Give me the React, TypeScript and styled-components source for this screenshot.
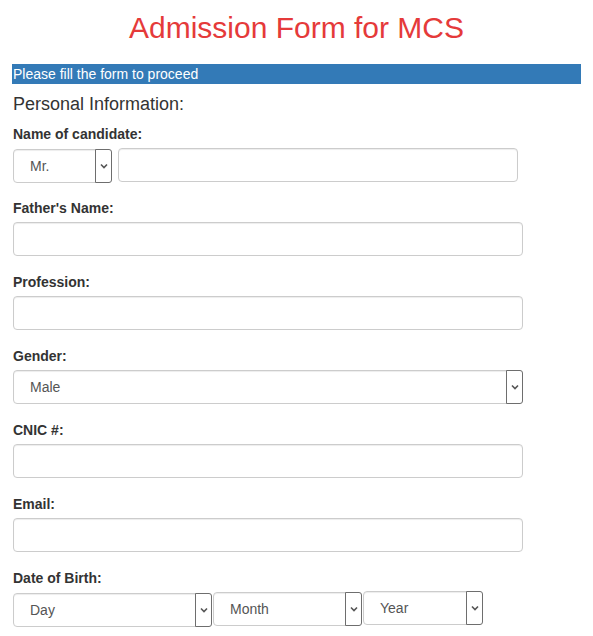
import React from 'react';
import styled, {createGlobalStyle} from 'styled-components';

const GlobalStyle = createGlobalStyle`
    body {
        margin: 0;
        background: #fff;
        font-family: "Liberation Sans", Arial, sans-serif;
        color: #333;
    }
`;

const Page = styled.div`
    padding: 11px 12px 0 12px;
`;

const Title = styled.h1`
    margin: 0 0 20px 0;
    font-size: 30px;
    line-height: 33px;
    font-weight: normal;
    text-align: center;
    color: #e53a3a;
`;

const Notice = styled.div`
    width: 569px;
    height: 20px;
    background: #337ab7;
    color: #fff;
    font-size: 14px;
    line-height: 20px;
    padding-left: 1px;
    box-sizing: border-box;
`;

const Section = styled.h3`
    margin: 10px 0 10px 1px;
    font-size: 18px;
    line-height: 20px;
    font-weight: normal;
    color: #333;
`;

const Form = styled.form`
    padding-left: 1px;
`;

const Group = styled.div`
    margin-bottom: 16px;
`;

const Label = styled.label`
    display: block;
    margin-bottom: 4px;
    font-size: 14px;
    line-height: 20px;
    font-weight: bold;
    color: #333;
`;

const Row = styled.div<{$gap: number}>`
    display: flex;
    align-items: flex-start;
    gap: ${p => p.$gap}px;
`;

const Input = styled.input<{$width: number}>`
    display: block;
    width: ${p => p.$width}px;
    height: 34px;
    box-sizing: border-box;
    border: 1px solid #ccc;
    border-radius: 4px;
    box-shadow: inset 0 1px 1px rgba(0, 0, 0, 0.075);
    background: #fff;
    padding: 6px 12px;
    font-family: inherit;
    font-size: 14px;
    color: #555;
    outline: none;
`;

const SelectBox = styled.div<{$width: number; $offset?: number}>`
    position: relative;
    display: flex;
    align-items: center;
    width: ${p => p.$width}px;
    height: 34px;
    transform: translateY(${p => p.$offset || 0}px);
    box-sizing: border-box;
    border: 1px solid #ccc;
    border-radius: 4px;
    box-shadow: inset 0 1px 1px rgba(0, 0, 0, 0.075);
    background: #fff;
    padding-left: 16px;
    font-size: 14px;
    color: #555;
`;

const Arrow = styled.span`
    position: absolute;
    top: -1px;
    right: -1px;
    bottom: -1px;
    width: 17px;
    box-sizing: border-box;
    border: 1px solid #6e6e6e;
    border-radius: 0 3px 3px 0;
    background: #fff;
    display: flex;
    align-items: center;
    justify-content: center;
`;

const Chevron = () => (
    <svg width="8" height="6" viewBox="0 0 8 6">
        <path d="M1 1.5 L4 4.5 L7 1.5" fill="none" stroke="#555" strokeWidth="1.6"/>
    </svg>
);

const Select = ({value, width, offset}: {value: string; width: number; offset?: number}) => (
    <SelectBox $width={width} $offset={offset}>
        {value}
        <Arrow><Chevron/></Arrow>
    </SelectBox>
);

const fields = ['Profession:'];

export default function App() {
    return (
        <>
            <GlobalStyle/>
            <Page>
                <Title>Admission Form for MCS</Title>
                <Notice>Please fill the form to proceed</Notice>
                <Section>Personal Information:</Section>
                <Form>
                    <Group>
                        <Label>Name of candidate:</Label>
                        <Row $gap={6}>
                            <Select value="Mr." width={99} offset={1}/>
                            <Input $width={400}/>
                        </Row>
                    </Group>
                    <Group>
                        <Label>Father's Name:</Label>
                        <Input $width={510}/>
                    </Group>
                    {fields.map(f => (
                        <Group key={f}>
                            <Label>{f}</Label>
                            <Input $width={510}/>
                        </Group>
                    ))}
                    <Group>
                        <Label>Gender:</Label>
                        <Select value="Male" width={510}/>
                    </Group>
                    <Group>
                        <Label>CNIC #:</Label>
                        <Input $width={510}/>
                    </Group>
                    <Group>
                        <Label>Email:</Label>
                        <Input $width={510}/>
                    </Group>
                    <Group>
                        <Label>Date of Birth:</Label>
                        <Row $gap={1}>
                            <Select value="Day" width={199} offset={1}/>
                            <Select value="Month" width={149}/>
                            <Select value="Year" width={120} offset={-1}/>
                        </Row>
                    </Group>
                </Form>
            </Page>
        </>
    );
}
